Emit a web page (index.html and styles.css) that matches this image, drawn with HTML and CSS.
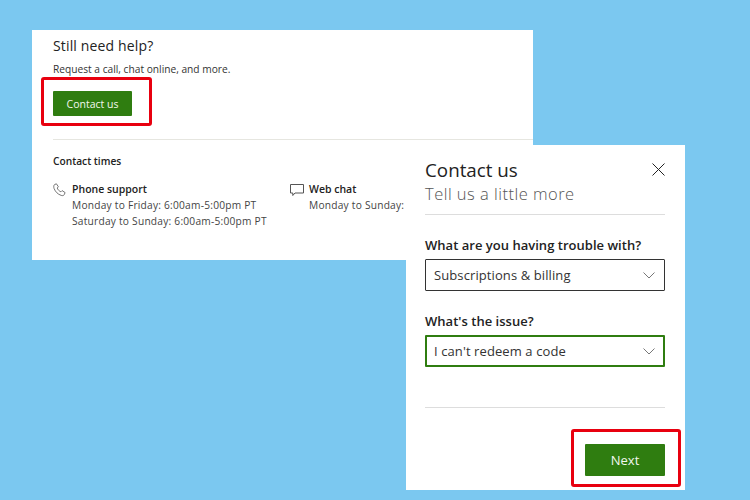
FILE: index.html
```html
<!DOCTYPE html>
<html lang="en">
<head>
<meta charset="utf-8">
<title>Contact us</title>
<link rel="stylesheet" href="styles.css">
</head>
<body>
<main class="canvas">
  <section class="help-panel">
    <h2 class="help-title">Still need help?</h2>
    <p class="help-text">Request a call, chat online, and more.</p>
    <div class="help-action"><button class="btn btn-small">Contact us</button></div>
    <hr class="help-rule">
    <h3 class="times-title">Contact times</h3>
    <div class="times">
      <div class="time-col time-phone">
        <svg class="time-icon" viewBox="0 0 14 14" width="14" height="14" aria-hidden="true"><path d="M1.500 1.600 3.400.8l2 3-1.200 1.200c.6 1.700 2 3.100 3.700 3.800l1.200-1.200 3 2-.9 2.100c-.4.900-1.600 1.200-3 .7C4.700 11.200 2.500 8.900 1.100 5.600.5 4 .7 2.200 1.500 1.600Z" fill="none" stroke="#666" stroke-width=".9"/></svg>
        <div class="time-body">
          <h4 class="time-name">Phone support</h4>
          <p class="time-line">Monday to Friday: 6:00am-5:00pm PT</p>
          <p class="time-line">Saturday to Sunday: 6:00am-5:00pm PT</p>
        </div>
      </div>
      <div class="time-col">
        <svg class="time-icon" viewBox="0 0 14 14" width="14" height="14" aria-hidden="true"><path d="M.5 1.500h13v8.500H5L2.800 12.500V10H.5Z" fill="none" stroke="#555" stroke-width="1"/></svg>
        <div class="time-body">
          <h4 class="time-name">Web chat</h4>
          <p class="time-line">Monday to Sunday:</p>
        </div>
      </div>
    </div>
  </section>

  <section class="dialog">
    <header class="dialog-head">
      <div>
        <h1 class="dialog-title">Contact us</h1>
        <p class="dialog-sub">Tell us a little more</p>
      </div>
      <svg class="close" viewBox="0 0 13 13" width="13" height="13" aria-hidden="true"><path d="M.5.500l12 12M12.500.500l-12 12" stroke="#222" stroke-width="1" fill="none"/></svg>
    </header>
    <label class="field-label">What are you having trouble with?</label>
    <div class="select">
      <span>Subscriptions &amp; billing</span>
      <svg class="chev" viewBox="0 0 12 7" width="12" height="7" aria-hidden="true"><path d="M.5.500 6 6l5.500-5.500" stroke="#777" stroke-width="1" fill="none"/></svg>
    </div>
    <label class="field-label field-label-2">What's the issue?</label>
    <div class="select select-active">
      <span>I can't redeem a code</span>
      <svg class="chev" viewBox="0 0 12 7" width="12" height="7" aria-hidden="true"><path d="M.5.500 6 6l5.500-5.500" stroke="#777" stroke-width="1" fill="none"/></svg>
    </div>
    <hr class="dialog-rule">
    <div class="dialog-foot"><button class="btn btn-next">Next</button></div>
  </section>

  <div class="mark mark-contact"></div>
  <div class="mark mark-next"></div>
</main>
</body>
</html>
```
FILE: styles.css
```css
* { box-sizing: border-box; }
html, body { margin: 0; padding: 0; }
body { font-family: "Open Sans", "Noto Sans", sans-serif; color: #1a1a1a; }
h1, h2, h3, h4, p { margin: 0; font-weight: 400; }
hr { border: 0; margin: 0; }

.canvas { position: relative; width: 750px; height: 500px; overflow: hidden; background: #7bc8f0; }

.help-panel { position: absolute; left: 32px; top: 30px; width: 501px; height: 230px; background: #fff; padding: 7px 0 0 21px; }
.help-title { font-size: 14px; line-height: 18px; font-weight: 500; color: #222; letter-spacing: .15px; }
.help-text { margin-top: 7px; font-size: 10.200px; line-height: 14px; color: #333; }
.help-action { margin-top: 15px; }
.help-rule { margin-top: 23px; width: 480px; height: 1px; background: #e6e6e0; }
.times-title { margin-top: 14px; font-size: 10.200px; line-height: 14px; font-weight: 600; color: #222; }
.times { display: flex; margin-top: 14px; }
.time-col { display: flex; gap: 5px; }
.time-phone { width: 237px; }
.time-icon { flex: none; margin-top: 1px; }
.time-name { font-size: 10.500px; line-height: 14px; font-weight: 600; color: #222; }
.time-line { margin-top: 2px; font-size: 10.200px; line-height: 14px; color: #444; letter-spacing: .23px; }

.btn { display: block; border: 0; border-radius: 1px; background: #2f7d10; color: #f2f7ee; font-family: inherit; padding: 0; }
.btn-small { width: 79px; height: 25px; font-size: 10.500px; }
.btn-next { width: 80px; height: 32px; font-size: 13px; }

.dialog { position: absolute; left: 406px; top: 145px; width: 279px; height: 345px; background: #fff; padding: 14px 20px 0 19px; }
.dialog-head { display: flex; justify-content: space-between; align-items: flex-start; height: 56px; border-bottom: 1px solid #ddd; }
.dialog-title { font-size: 18.800px; line-height: 22px; color: #222; }
.dialog-sub { margin-top: 1px; font-size: 16.500px; line-height: 24px; font-weight: 300; color: #555; letter-spacing: .48px; }
.close { margin-top: 4px; }
.field-label { display: block; margin-top: 21px; font-size: 13px; line-height: 18px; font-weight: 600; color: #222; letter-spacing: .02px; }
.field-label-2 { margin-top: 21px; }
.select { display: flex; align-items: center; justify-content: space-between; margin-top: 5px; height: 32px; border: 1px solid #333; border-radius: 1px; padding: 0 9px 0 8px; font-size: 13px; color: #333; letter-spacing: .1px; }
.select-active { margin-top: 5px; border: 2px solid #2f7d10; padding: 0 8px 0 7px; }
.dialog-rule { margin-top: 40px; height: 1px; background: #ddd; }
.dialog-foot { display: flex; justify-content: flex-end; margin-top: 36px; }

.mark { position: absolute; border: 3px solid #e8000f; border-radius: 3px; }
.mark-contact { left: 41px; top: 77px; width: 111px; height: 49px; }
.mark-next { left: 571px; top: 429px; width: 110px; height: 58px; }
```
